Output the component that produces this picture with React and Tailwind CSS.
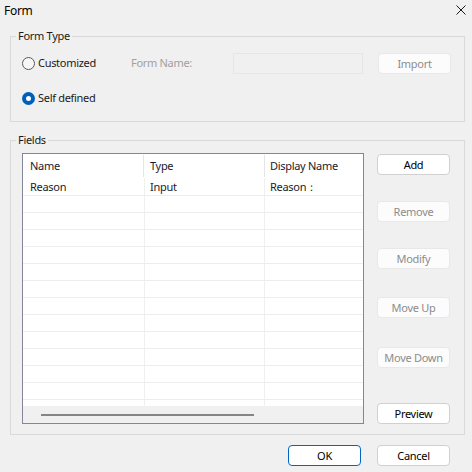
import React from 'react';

const ROWS = 12;

function Radio({ checked, label }) {
  return (
    <div className="flex items-center h-[21px]">
      {checked ? (
        <span className="w-[13px] h-[13px] rounded-full bg-[#005fb8] flex items-center justify-center">
          <span className="w-[5px] h-[5px] rounded-full bg-white"></span>
        </span>
      ) : (
        <span className="w-[13px] h-[13px] rounded-full border border-[#5a5a5a] bg-[#f7f7f7]"></span>
      )}
      <span className="ml-[3px] text-[#1a1a1a]">{label}</span>
    </div>
  );
}

function Btn({ children, disabled, primary, className = '' }) {
  const look = primary
    ? 'bg-white border-[#0067c0] text-black'
    : disabled
    ? 'bg-[#fcfcfc] border-[#e8e8e8] text-[#8c8c8c]'
    : 'bg-white border-[#d0d0d0] text-black';
  return (
    <button
      type="button"
      className={`w-[73px] h-[21px] border rounded-[4px] flex items-center justify-center leading-none ${look} ${className}`}
    >
      {children}
    </button>
  );
}

export default function App() {
  return (
    <div className="w-[472px] h-[472px] bg-[#f0f0f0] font-['Noto_Sans',sans-serif] text-[11px] tracking-[-0.3px] text-black overflow-hidden">
      {/* Title bar */}
      <div className="h-[28px] flex items-start justify-between pt-[3px]">
        <span className="ml-[4px] leading-[16px] text-[12px]">Form</span>
        <svg className="mt-[2px] mr-[6px]" width="10" height="10" viewBox="0 0 10 10">
          <path d="M0.5 0.5 L9.5 9.5 M9.5 0.5 L0.5 9.5" stroke="#1a1a1a" strokeWidth="1" />
        </svg>
      </div>

      {/* Form Type group */}
      <fieldset className="ml-[10px] w-[455px] border border-[#d9d9d9] p-0">
        <legend className="ml-[5px] px-[2px] leading-[16px] text-[#1a1a1a]">Form Type</legend>
        <div className="pl-[11px] pt-[9px] pb-[12px]">
          <div className="flex items-center h-[21px]">
            <div className="w-[109px]">
              <Radio label="Customized" />
            </div>
            <span className="w-[102px] text-[#a0a0a0]">Form Name:</span>
            <div className="w-[130px] h-[21px] border border-[#e6e6e6] bg-[#f0f0f0]"></div>
            <Btn disabled className="ml-[15px] w-[72px]">Import</Btn>
          </div>
          <div className="mt-[14px]">
            <Radio checked label="Self defined" />
          </div>
        </div>
      </fieldset>

      {/* Fields group */}
      <fieldset className="mt-[10px] ml-[10px] w-[455px] border border-[#d9d9d9] p-0">
        <legend className="ml-[5px] px-[2px] leading-[16px] text-[#1a1a1a]">Fields</legend>
        <div className="flex pl-[11px] pt-[5px] pb-[10px]">
          <div className="w-[342px] h-[271px] border border-[#858599] bg-white flex flex-col overflow-hidden">
            {/* header */}
            <div className="h-[24px] flex items-center shrink-0 text-[#1a1a2a]">
              <div className="w-[120px] pl-[7px]">Name</div>
              <div className="w-px h-[22px] bg-[#e5e5e5]"></div>
              <div className="w-[120px] pl-[6px]">Type</div>
              <div className="w-px h-[22px] bg-[#e5e5e5]"></div>
              <div className="flex-1 pl-[5px] whitespace-nowrap">Display Name</div>
            </div>
            {/* first row */}
            <div className="h-[18px] flex border-b border-[#ededed] shrink-0 text-[#1a1a2a]">
              <div className="w-[122px] pl-[7px] border-r border-[#f0f0f0] leading-[17px]">Reason</div>
              <div className="w-[120px] pl-[5px] border-r border-[#f0f0f0] leading-[17px]">Input</div>
              <div className="flex-1 pl-[5px] leading-[17px]">Reason：</div>
            </div>
            {Array.from({ length: ROWS }).map((_, i) => (
              <div key={i} className="h-[17px] flex border-b border-[#ededed] shrink-0">
                <div className="w-[122px] border-r border-[#f0f0f0]"></div>
                <div className="w-[120px] border-r border-[#f0f0f0]"></div>
                <div className="flex-1"></div>
              </div>
            ))}
            <div className="h-[6px] flex shrink-0">
              <div className="w-[122px] border-r border-[#f0f0f0]"></div>
              <div className="w-[120px] border-r border-[#f0f0f0]"></div>
              <div className="flex-1"></div>
            </div>
            {/* horizontal scrollbar */}
            <div className="h-[17px] bg-[#f0f0f0] flex items-center shrink-0">
              <div className="ml-[18px] w-[213px] h-[2px] bg-[#858585]"></div>
            </div>
          </div>

          <div className="ml-[13px] flex flex-col">
            <Btn className="mt-[1px]">Add</Btn>
            <Btn disabled className="mt-[26px]">Remove</Btn>
            <Btn disabled className="mt-[26px]">Modify</Btn>
            <Btn disabled className="mt-[28px]">Move Up</Btn>
            <Btn disabled className="mt-[29px]">Move Down</Btn>
            <Btn className="mt-[35px]">Preview</Btn>
          </div>
        </div>
      </fieldset>

      {/* Dialog buttons */}
      <div className="mt-[10px] flex justify-end gap-[16px] pr-[22px]">
        <Btn primary>OK</Btn>
        <Btn>Cancel</Btn>
      </div>
    </div>
  );
}
